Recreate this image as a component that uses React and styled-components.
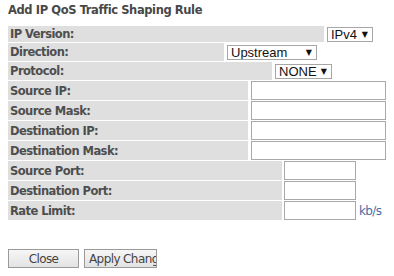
import React from "react";
import styled, { createGlobalStyle } from "styled-components";

const Global = createGlobalStyle`
  html, body { margin: 0; padding: 0; background: #fff; }
  body { font-family: Tahoma, "DejaVu Sans", Verdana, sans-serif; }
`;

const Page = styled.div`
  padding: 2px 8px 0 8px;
  width: 394px;
  height: 276px;
  box-sizing: border-box;
`;

const Title = styled.h1`
  margin: 0;
  font: bold 11.5px "DejaVu Sans", sans-serif;
  letter-spacing: -0.4px;
  color: #484848;
  height: 24px;
  line-height: 16px;
`;

const Form = styled.div`
  display: flex;
  flex-direction: column;
  gap: 1px;
`;

const Row = styled.div`
  display: flex;
  align-items: center;
  gap: ${(p) => p.$gap || 2}px;
  height: ${(p) => p.$h}px;
`;

const Label = styled.div`
  width: ${(p) => p.$w}px;
  height: 100%;
  flex: none;
  background: #dfdfdf;
  box-sizing: border-box;
  padding-left: 2px;
  display: flex;
  align-items: center;
  font: bold 11.5px "DejaVu Sans", sans-serif;
  letter-spacing: -0.55px;
  color: #4e4e4e;
  white-space: nowrap;
`;

const SelectWrap = styled.div`
  position: relative;
  width: ${(p) => p.$w}px;
  height: 15px;
  flex: none;
`;

const Select = styled.select`
  display: block;
  appearance: none;
  -webkit-appearance: none;
  width: 100%;
  height: 100%;
  box-sizing: border-box;
  border: 1px solid #a6a6a6;
  border-radius: 0;
  background: #fff;
  padding: 0 0 0 3px;
  margin: 0;
  font: 13px "Liberation Sans", Arial, sans-serif;
  color: #111;
  line-height: 13px;
  outline: none;
`;

const Arrow = styled.span`
  position: absolute;
  right: 5px;
  top: 1px;
  font: 8px "DejaVu Sans", sans-serif;
  color: #111;
  pointer-events: none;
  line-height: 13px;
`;

const Input = styled.input`
  display: block;
  width: ${(p) => p.$w}px;
  height: 19px;
  flex: none;
  box-sizing: border-box;
  border: 1px solid #a9a9a9;
  margin: 0;
  padding: 0 2px;
  background: #fff;
  outline: none;
`;

const Unit = styled.span`
  font: 12px "DejaVu Sans", sans-serif;
  letter-spacing: -0.6px;
  color: #4a6fa5;
  margin-left: 1px;
`;

const Buttons = styled.div`
  display: flex;
  gap: 5px;
  margin-top: 29px;
`;

const Button = styled.button`
  width: ${(p) => p.$w}px;
  height: 19px;
  box-sizing: border-box;
  border: 1px solid #9a9a9a;
  border-radius: 0;
  background: linear-gradient(#f6f6f6, #e3e3e3);
  font: 12px "DejaVu Sans", sans-serif;
  letter-spacing: -0.6px;
  color: #444;
  padding: 0 4px;
  margin: 0;
  white-space: nowrap;
  overflow: hidden;
  text-align: ${(p) => (p.$left ? "left" : "center")};
`;

function SelRow({ label, w, labelW, value, h }) {
  return (
    <Row $h={h} $gap={3}>
      <Label $w={labelW}>{label}</Label>
      <SelectWrap $w={w}>
        <Select defaultValue={value}>
          <option>{value}</option>
        </Select>
        <Arrow>▼</Arrow>
      </SelectWrap>
    </Row>
  );
}

function InRow({ label, labelW, w, unit }) {
  return (
    <Row $h={19} $gap={labelW === 240 ? 3 : 2}>
      <Label $w={labelW}>{label}</Label>
      <Input $w={w} />
      {unit && <Unit>{unit}</Unit>}
    </Row>
  );
}

export default function App() {
  return (
    <Page>
      <Global />
      <Title>Add IP QoS Traffic Shaping Rule</Title>
      <Form>
        <SelRow label="IP Version:" labelW={316} w={46} value="IPv4" h={16} />
        <SelRow label="Direction:" labelW={216} w={90} value="Upstream" h={18} />
        <SelRow label="Protocol:" labelW={264} w={57} value="NONE" h={18} />
        <InRow label="Source IP:" labelW={240} w={135} />
        <InRow label="Source Mask:" labelW={240} w={135} />
        <InRow label="Destination IP:" labelW={240} w={135} />
        <InRow label="Destination Mask:" labelW={240} w={135} />
        <InRow label="Source Port:" labelW={274} w={72} />
        <InRow label="Destination Port:" labelW={274} w={72} />
        <InRow label="Rate Limit:" labelW={274} w={72} unit="kb/s" />
      </Form>
      <Buttons>
        <Button $w={71}>Close</Button>
        <Button $w={73} $left>Apply Changes</Button>
      </Buttons>
    </Page>
  );
}
